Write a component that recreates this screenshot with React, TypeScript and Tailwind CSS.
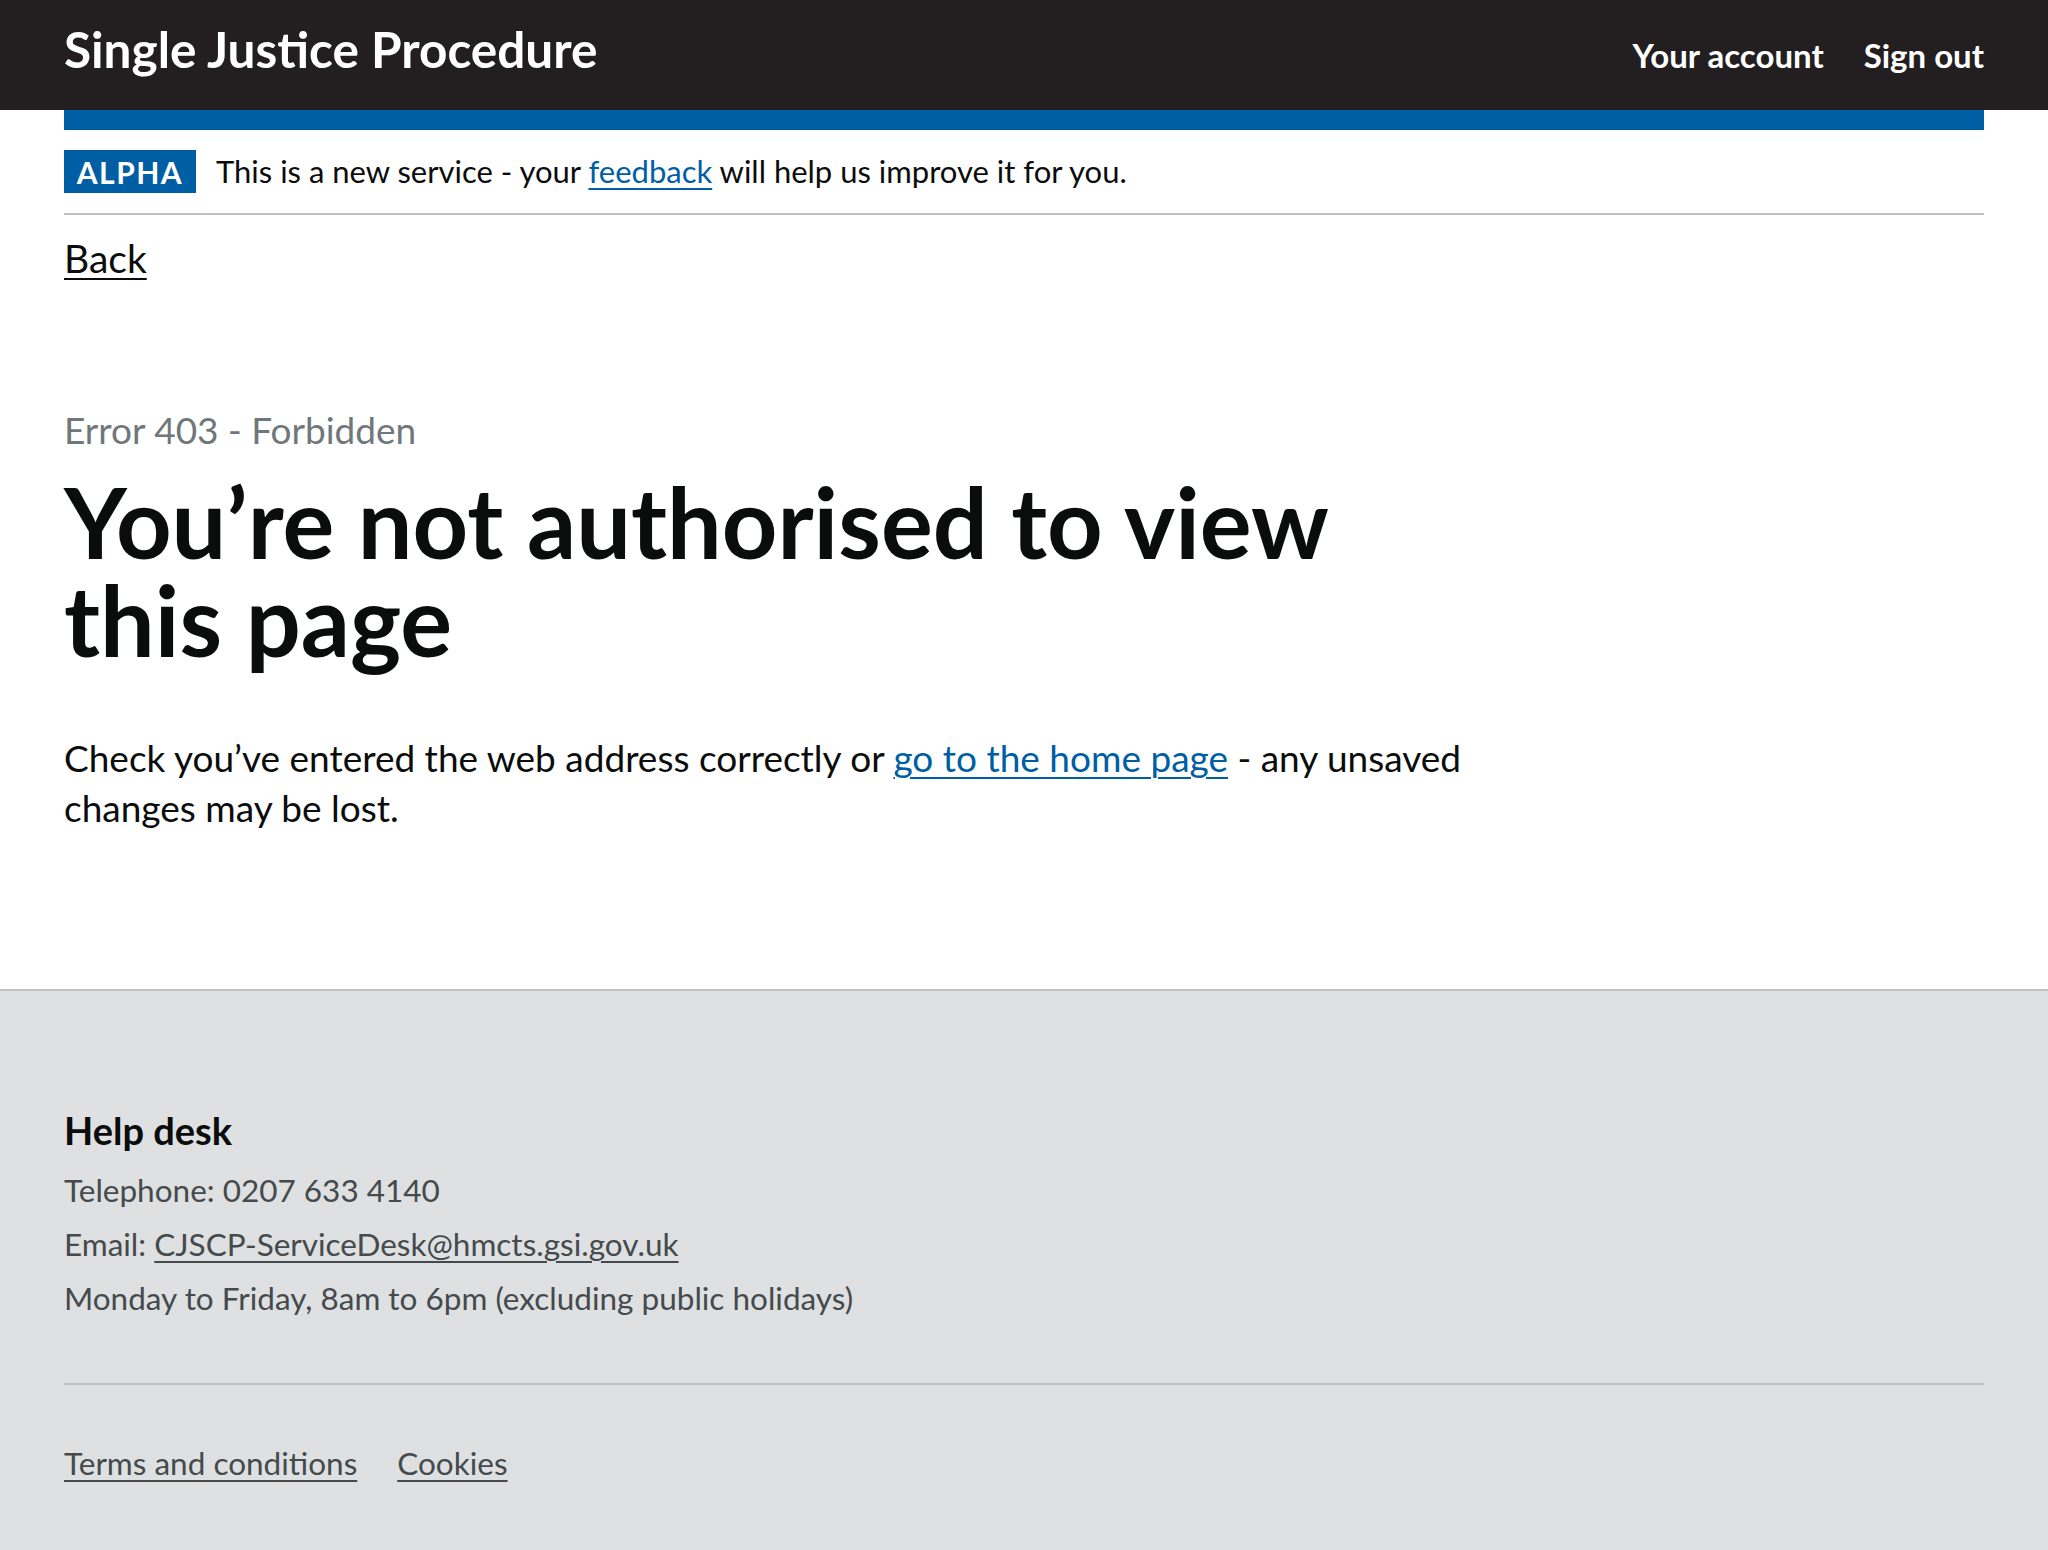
const font = { fontFamily: 'Lato, "Noto Sans", sans-serif' };

export default function App() {
  return (
    <div className="min-h-screen flex flex-col bg-white text-[#0b0c0c]" style={font}>
      <header className="bg-[#231f20]">
        <div className="h-[110px] px-[64px] pt-[19px] flex items-baseline justify-between">
          <a href="#" className="text-white font-bold text-[49.5px] leading-[60px]">
            Single Justice Procedure
          </a>
          <nav className="flex items-baseline gap-[40px] text-white font-bold text-[33px] leading-[40px]">
            <a href="#">Your account</a>
            <a href="#">Sign out</a>
          </nav>
        </div>
      </header>

      <div className="mx-[64px] h-[20px] bg-[#005ea5]" />

      <div className="mx-[64px] py-[20px] border-b-2 border-[#bfc1c3] flex items-center">
        <strong className="w-[132px] h-[43px] bg-[#005ea5] text-white text-center font-bold text-[30px] leading-[44px] tracking-[1.5px]">
          ALPHA
        </strong>
        <span className="ml-[20px] text-[31px] leading-[43px]">
          This is a new service - your{' '}
          <a href="#" className="text-[#005ea5] underline decoration-2 underline-offset-[5px]">
            feedback
          </a>{' '}
          will help us improve it for you.
        </span>
      </div>

      <div className="mx-[64px] mt-[23px]">
        <a href="#" className="text-[39px] leading-[40px] underline decoration-2 underline-offset-[5px]">
          Back
        </a>
      </div>

      <main className="mx-[64px] pt-[131px] pb-[156px]">
        <span className="block text-[37px] leading-[40px] text-[#6f777b]">Error 403 - Forbidden</span>
        <h1 className="mt-[23px] text-[97px] leading-[98px] font-bold">
          You’re not authorised to view
          <br />
          this page
        </h1>
        <p className="mt-[64px] text-[37px] leading-[50px]">
          Check you’ve entered the web address correctly or{' '}
          <a href="#" className="text-[#005ea5] underline decoration-2 underline-offset-[5px]">
            go to the home page
          </a>{' '}
          - any unsaved
          <br />
          changes may be lost.
        </p>
      </main>

      <footer className="flex-1 bg-[#dee0e2] border-t-2 border-[#bfc1c3]">
        <div className="mx-[64px] pt-[119px]">
          <h2 className="text-[38px] leading-[40px] font-bold">Help desk</h2>
          <div className="mt-[13px] text-[31.5px] leading-[54px] text-[#454a4d]">
            <p>Telephone: 0207 633 4140</p>
            <p>
              Email:{' '}
              <a href="#" className="underline decoration-2 underline-offset-[5px]">
                CJSCP-ServiceDesk@hmcts.gsi.gov.uk
              </a>
            </p>
            <p>Monday to Friday, 8am to 6pm (excluding public holidays)</p>
          </div>
          <div className="mt-[58px] h-[2px] bg-[#bfc1c3]" />
          <ul className="mt-[58px] flex gap-[40px] text-[31.5px] leading-[40px] text-[#454a4d]">
            <li>
              <a href="#" className="underline decoration-2 underline-offset-[5px]">
                Terms and conditions
              </a>
            </li>
            <li>
              <a href="#" className="underline decoration-2 underline-offset-[5px]">
                Cookies
              </a>
            </li>
          </ul>
        </div>
      </footer>
    </div>
  );
}
